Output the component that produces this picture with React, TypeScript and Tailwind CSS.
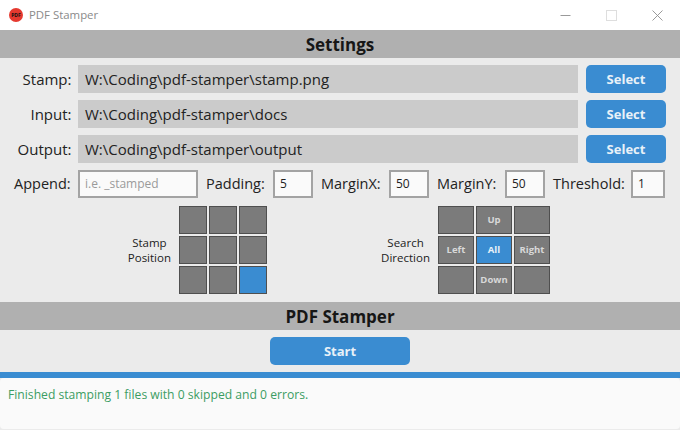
const font = { fontFamily: '"Open Sans", "Noto Sans", sans-serif' };

const pathRows = [
  { label: "Stamp:", value: "W:\\Coding\\pdf-stamper\\stamp.png" },
  { label: "Input:", value: "W:\\Coding\\pdf-stamper\\docs" },
  { label: "Output:", value: "W:\\Coding\\pdf-stamper\\output" },
];

const directions = ["", "Up", "", "Left", "All", "Right", "", "Down", ""];

function Header({ title }: { title: string }) {
  return (
    <div className="h-[28px] pt-[1px] bg-[#b0b0b0] flex items-center justify-center text-[17px] font-bold text-[#161616]">
      {title}
    </div>
  );
}

function SmallField({ label, value, labelWidth, width }: { label: string; value: string; labelWidth: string; width: string }) {
  return (
    <div className="flex items-center gap-[7px]">
      <span className={`${labelWidth} whitespace-nowrap text-[14.5px] text-[#222]`}>{label}</span>
      <div className={`${width} h-[28px] border-2 border-[#a3a3a3] bg-[#fafafa] pl-[5px] flex items-center text-[12px] text-[#222]`}>
        {value}
      </div>
    </div>
  );
}

export default function App() {
  return (
    <div className="w-[680px] h-[430px] overflow-hidden bg-[#ebebeb] flex flex-col" style={font}>
      {/* title bar */}
      <div className="h-[30px] bg-white flex items-center pl-[9px] shrink-0">
        <div className="w-[14px] h-[14px] rounded-full bg-[#e5392f] flex items-center justify-center">
          <span className="text-[5px] font-bold text-[#111] leading-none">PDF</span>
        </div>
        <span className="ml-[6px] text-[11.4px] text-[#8a8a8a]">PDF Stamper</span>
        <div className="ml-auto flex items-center">
          <div className="w-[46px] flex justify-center">
            <svg width="11" height="11" viewBox="0 0 11 11" fill="none" stroke="#9a9a9a">
              <path d="M0.5 5.5h10" />
            </svg>
          </div>
          <div className="w-[46px] flex justify-center">
            <svg width="11" height="11" viewBox="0 0 11 11" fill="none" stroke="#dedede">
              <rect x="0.5" y="0.5" width="10" height="10" />
            </svg>
          </div>
          <div className="w-[46px] flex justify-center">
            <svg width="11" height="11" viewBox="0 0 11 11" fill="none" stroke="#8f8f8f" strokeWidth="0.9">
              <path d="M0.5 0.5l10 10M10.5 0.5l-10 10" />
            </svg>
          </div>
        </div>
      </div>

      <Header title="Settings" />

      {/* path rows */}
      <div className="flex flex-col gap-[7px] pt-[7px] pr-[14px]">
        {pathRows.map((row) => (
          <div key={row.label} className="flex items-center h-[28px]">
            <span className="w-[71.5px] text-right text-[15px] text-[#222]">{row.label}</span>
            <div className="ml-[6.5px] w-[500px] h-full bg-[#cbcbcb] pl-[7px] flex items-center text-[15px] text-[#222]">
              {row.value}
            </div>
            <button className="ml-[8px] w-[80px] h-full pt-[1px] rounded-[5px] bg-[#3a8cd1] text-[13px] font-bold text-[#e8f1f8]">
              Select
            </button>
          </div>
        ))}
      </div>

      {/* append row */}
      <div className="flex items-center h-[28px] mt-[7px] pl-[14px] gap-[8px]">
        <div className="flex items-center gap-[7px]">
          <span className="w-[57px] whitespace-nowrap text-[14.5px] text-[#222]">Append:</span>
          <div className="w-[120px] h-[28px] border-2 border-[#a3a3a3] bg-[#fafafa] pl-[5px] flex items-center text-[12px] text-[#9a9a9a]">
            i.e. _stamped
          </div>
        </div>
        <SmallField label="Padding:" value="5" labelWidth="w-[60px]" width="w-[40px]" />
        <SmallField label="MarginX:" value="50" labelWidth="w-[61px]" width="w-[40px]" />
        <SmallField label="MarginY:" value="50" labelWidth="w-[61px]" width="w-[40px]" />
        <SmallField label="Threshold:" value="1" labelWidth="w-[71px]" width="w-[34px]" />
      </div>

      {/* position grids */}
      <div className="flex mt-[8px] h-[88px]">
        <div className="w-[179px] pr-[8px] flex items-center justify-end text-center text-[11.5px] leading-[15px] text-[#222]">
          Stamp
          <br />
          Position
        </div>
        <div className="grid grid-cols-[repeat(3,28px)] grid-rows-[repeat(3,28px)] gap-[2px]">
          {directions.map((_, i) => (
            <div key={i} className={`border border-[#4f4f4f] ${i === 8 ? "bg-[#3a8cd1]" : "bg-[#7b7b7b]"}`} />
          ))}
        </div>
        <div className="w-[171px] pr-[8px] flex items-center justify-end text-center text-[11.5px] leading-[15px] text-[#222]">
          Search
          <br />
          Direction
        </div>
        <div className="grid grid-cols-[repeat(3,36px)] grid-rows-[repeat(3,28px)] gap-[2px]">
          {directions.map((d, i) => (
            <div
              key={i}
              className={`border border-[#4f4f4f] flex items-center justify-center text-[9.5px] font-bold ${
                d === "All" ? "bg-[#3a8cd1] text-[#e8f1f8]" : "bg-[#7b7b7b] text-[#d8d8d8]"
              }`}
            >
              {d}
            </div>
          ))}
        </div>
      </div>

      <div className="mt-[8px]">
        <Header title="PDF Stamper" />
      </div>

      <div className="h-[42px] flex justify-center pt-[7px] shrink-0">
        <button className="w-[140px] h-[28px] pt-[1px] rounded-[5px] bg-[#3a8cd1] text-[13px] font-bold text-[#e8f1f8]">
          Start
        </button>
      </div>

      {/* log */}
      <div className="h-[6px] bg-[#3a8cd1] shrink-0" />
      <div className="flex-1 mb-[1px] rounded-[4px] bg-[#fafafa] pl-[8px] pt-[8px] text-[12.15px] leading-[17px] text-[#3c9d63]">
        Finished stamping 1 files with 0 skipped and 0 errors.
      </div>
    </div>
  );
}
